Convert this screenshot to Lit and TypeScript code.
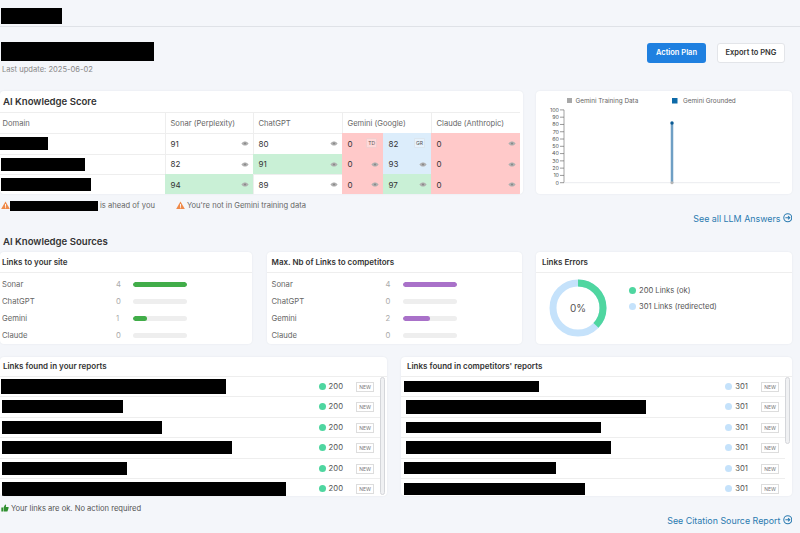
import { LitElement, html, css, svg } from "lit";
import { customElement } from "lit/decorators.js";

const eye = html`<svg class="eye" viewBox="0 0 10 6" width="8" height="5"><path d="M0.5 3C2 1 3.5 0.4 5 0.4S8 1 9.5 3C8 5 6.5 5.6 5 5.6S2 5 0.5 3Z" fill="#b0b0b0"/><circle cx="5" cy="3" r="1.3" fill="#888"/></svg>`;
const warn = html`<svg class="warn" viewBox="0 0 12 11" width="9" height="8.5"><path d="M6 0.4 11.8 10.6H0.2Z" fill="#ef8a4a"/><rect x="5.4" y="3.8" width="1.2" height="3.8" fill="#fff"/><rect x="5.4" y="8.2" width="1.2" height="1.2" fill="#fff"/></svg>`;
const arrow = html`<svg class="arrow" viewBox="0 0 12 12" width="9.5" height="9.5"><circle cx="6" cy="6" r="5" fill="none" stroke="#2a7ab0" stroke-width="1.3"/><path d="M3 6H8.4M6.4 3.9 8.6 6 6.4 8.1" fill="none" stroke="#2a7ab0" stroke-width="1.3"/></svg>`;
const thumb = html`<svg class="thumb" viewBox="0 0 12 12" width="8" height="8"><path d="M0.5 5.2H3V11.2H0.5ZM3.8 5.2 6.2 0.8C7.4 0.8 7.9 1.7 7.6 2.8L7.2 4.4H10.6C11.4 4.4 11.8 5.1 11.5 5.8L9.9 10.4C9.7 10.9 9.3 11.2 8.8 11.2H3.8Z" fill="#2f8f2f"/></svg>`;

type Cell = { v: number; bg?: string; tag?: string };
const rows: { w: number; x: number; cells: Cell[] }[] = [
  { w: 48, x: 0, cells: [{ v: 91 }, { v: 80 }, { v: 0, bg: "red", tag: "TD" }, { v: 82, bg: "blue", tag: "GR" }, { v: 0, bg: "red" }] },
  { w: 84, x: 1, cells: [{ v: 82 }, { v: 91, bg: "green" }, { v: 0, bg: "red" }, { v: 93, bg: "blue" }, { v: 0, bg: "red" }] },
  { w: 90, x: 1, cells: [{ v: 94, bg: "green" }, { v: 89 }, { v: 0, bg: "red" }, { v: 97, bg: "green" }, { v: 0, bg: "red" }] },
];
const yours = [["Sonar", 4], ["ChatGPT", 0], ["Gemini", 1], ["Claude", 0]] as [string, number][];
const rivals = [["Sonar", 4], ["ChatGPT", 0], ["Gemini", 2], ["Claude", 0]] as [string, number][];
const listA = [[1, 225, 15], [2, 121, 13], [2, 160, 13], [2, 230, 13], [2, 125, 13], [2, 284, 14]];
const listB = [[3, 135, 11], [5, 240, 14], [5, 195, 11], [5, 205, 13], [3, 152, 12], [3, 181, 12]];

@customElement("app-root")
export class AppRoot extends LitElement {
  static styles = css`
    :host { display: block; width: 800px; height: 533px; overflow: hidden; background: #f4f6fa; font-family: Inter, "Liberation Sans", sans-serif; color: #333; }
    .black { display: block; background: #000; }
    .top { border-bottom: 1px solid #dfe2e7; padding: 8px 0 0 1px; height: 18px; }
    .top .black { width: 61px; height: 16px; }
    .page { width: 792px; }
    .title { display: flex; justify-content: space-between; height: 33px; margin-top: 15px; padding-left: 1px; }
    .title .black { width: 153px; height: 19px; }
    .update { font-size: 7.6px; line-height: 13px; margin: 2px 0 0 1px; color: #888; }
    .btns { display: flex; gap: 11px; margin: 1px 7px 0 0; }
    .btn { height: 19.5px; box-sizing: border-box; border-radius: 3px; font-size: 7.5px; font-weight: 600; display: flex; align-items: center; justify-content: center; }
    .primary { width: 59px; background: #1f80e0; color: #fff; }
    .secondary { width: 68px; background: #fff; border: 1px solid #e3e5e9; color: #333; }
    .card { background: #fff; border-radius: 4px; box-shadow: 0 0 2px rgba(30,40,60,.08); overflow: hidden; position: relative; }
    .scoreRow { display: grid; grid-template-columns: 523px 256px; gap: 13px; height: 103px; margin-top: 16px; }
    h2 { margin: 0; font-size: 9.6px; font-weight: 600; color: #333; }
    .scoreTitle { height: 21px; display: flex; align-items: center; padding-left: 3px; }
    .table { display: grid; grid-template-columns: 165px 88px 89px 41px 48px 89px; grid-template-rows: 21px repeat(3, 20.5px); }
    .th { font-size: 7.6px; color: #666; display: flex; align-items: center; padding-left: 4.5px; border-top: 1px solid #eee; border-left: 1px solid #eee; box-sizing: border-box; white-space: nowrap; }
    .th.first { border-left: 0; padding-left: 2.5px; }
    .th.wide { grid-column: span 2; }
    .dom { border-top: 1px solid #eee; display: flex; align-items: center; box-sizing: border-box; }
    .dom .black { height: 13px; }
    .td { font-size: 8px; color: #333; display: flex; align-items: center; justify-content: space-between; padding: 0 4.5px; border-top: 1px solid #eee; border-left: 1px solid #eee; box-sizing: border-box; }
    .td.red { background: #ffc9c9; border-color: #ffc9c9; }
    .td.green { background: #c9f0d6; border-color: #c9f0d6; }
    .td.blue { background: #dcedfb; border-color: #dcedfb; }
    .eye { display: block; }
    .tag { font-size: 5px; color: #555; border: 1px solid rgba(0,0,0,.05); background: rgba(255,255,255,.3); height: 10px; min-width: 10px; padding: 0 1px; box-sizing: border-box; border-radius: 1px; display: flex; align-items: center; justify-content: center; margin: -1px 1.5px 0 0; }
    .chart { display: block; }
    .chart text { font-family: Inter, "Liberation Sans", sans-serif; }
    .warnings { display: flex; align-items: center; height: 13px; margin-top: 5px; padding-left: 1px; font-size: 7.6px; color: #666; }
    .warnings .black { width: 88px; height: 10px; margin: 0 2px 0 0; }
    .warn { display: block; flex: none; }
    .second { margin-left: 21px; display: flex; align-items: center; gap: 2px; }
    .link { height: 12px; display: flex; justify-content: flex-end; align-items: center; gap: 2px; font-size: 8.9px; color: #2a7ab0; }
    .arrow { display: block; }
    .heading { height: 14px; margin-top: 10px; padding-left: 3px; display: flex; align-items: center; }
    .srcRow { display: grid; grid-template-columns: 252px 255px 256px; column-gap: 14.5px; height: 92px; margin-top: 4px; }
    .cardHead { height: 21px; box-sizing: border-box; border-bottom: 1px solid #eee; display: flex; align-items: center; padding-left: 2px; font-size: 8px; font-weight: 600; color: #333; }
    .second-card .cardHead, .second-card .bars { padding-left: 5px; }
    .third-card .cardHead { padding-left: 6px; }
    .bars { padding: 3px 0 0 2px; }
    .bar { display: grid; grid-template-columns: 112px 19px 54px; align-items: center; height: 17px; font-size: 7.7px; color: #666; }
    .num { color: #aaa; text-align: left; padding-left: 2px; }
    .track { height: 5px; background: #eee; border-radius: 3px; overflow: hidden; }
    .fill { height: 5px; border-radius: 3px; }
    .fill.g { background: #41ad49; }
    .fill.p { background: #a971c9; }
    .errBody { display: flex; }
    .donut { display: block; margin: 4px 0 0 12px; flex: none; }
    .legend { margin: 9px 0 0 21px; font-size: 7.6px; color: #555; }
    .legend div { display: flex; align-items: center; gap: 3px; height: 16px; }
    .dot { width: 7px; height: 7px; border-radius: 50%; flex: none; display: block; }
    .dot.ok { background: #4fd6a0; }
    .dot.re { background: #c5e2fb; }
    .listRow { display: grid; grid-template-columns: 387px 391px; column-gap: 14px; height: 139px; margin-top: 13px; }
    .listHead { height: 19.5px; box-sizing: border-box; border-bottom: 1px solid #eee; display: flex; align-items: center; padding-left: 3px; font-size: 8px; font-weight: 600; }
    .second-list .listHead { padding-left: 6px; }
    .listBody { display: flex; height: 119.5px; overflow: hidden; }
    .rows { flex: 1; min-width: 0; }
    .row { height: 20.5px; box-sizing: border-box; border-bottom: 1px solid #eee; display: flex; align-items: center; }
    .status { margin-left: auto; display: flex; align-items: center; gap: 3px; font-size: 7.7px; color: #555; }
    .new { margin: 1px 6px 0 13px; width: 18px; height: 10px; box-sizing: border-box; border: 1px solid #ddd; font-size: 5px; color: #777; display: flex; align-items: center; justify-content: center; }
    .scroll { width: 7px; flex: none; box-sizing: border-box; }
    .thumbBar { width: 5px; border: 1px solid #d4d6da; background: #f0f1f3; border-radius: 3px; box-sizing: border-box; }
    .a .thumbBar { height: 118px; }
    .b .thumbBar { height: 67px; }
    .footer { display: flex; align-items: center; gap: 2px; height: 12px; margin-top: 6px; padding-left: 1px; font-size: 7.6px; color: #555; }
    .thumb { display: block; }
  `;

  private chart() {
    const ticks = [100, 90, 80, 70, 60, 50, 40, 30, 20, 10, 0];
    const y = (v: number) => 91.7 - (v / 100) * 72.8;
    return html`<svg class="chart" width="256" height="103" viewBox="0 0 256 103">
      <rect x="31" y="7" width="5" height="5" fill="#a8a8a8"/>
      <text x="39.5" y="11.8" font-size="6.4" fill="#666">Gemini Training Data</text>
      <rect x="136" y="7" width="5.5" height="5.5" fill="#0d6aa8"/>
      <text x="147" y="11.8" font-size="6.4" fill="#666">Gemini Grounded</text>
      ${ticks.map((t) => svg`
        <text x="23" y="${y(t) + 1.9}" font-size="5.4" fill="#555" text-anchor="end">${t}</text>
        <line x1="24" x2="28" y1="${y(t)}" y2="${y(t)}" stroke="#555" stroke-width=".6"/>`)}
      <line x1="28" x2="28" y1="${y(100)}" y2="${y(0)}" stroke="#666" stroke-width=".6"/>
      <line x1="28" x2="244" y1="${y(0)}" y2="${y(0)}" stroke="#e4e6ea" stroke-width=".8"/>
      <line x1="136" x2="136" y1="${y(82)}" y2="${y(0)}" stroke="#6f9fc4" stroke-width="2.5"/>
      <circle cx="136" cy="${y(0)}" r="1.5" fill="#b5b5b5"/>
      <circle cx="136" cy="${y(82)}" r="1.7" fill="#0a5a94"/>
    </svg>`;
  }

  private bars(data: [string, number][], cls: string) {
    return html`<div class="bars">${data.map(([n, v]) => html`
      <div class="bar"><span>${n}</span><span class="num">${v}</span>
        <div class="track"><div class="fill ${cls}" style="width:${(v / 4) * 100}%"></div></div></div>`)}</div>`;
  }

  private list(data: number[][], code: string, dot: string) {
    return html`<div class="rows">${data.map(([x, w, h]) => html`
      <div class="row"><span class="black" style="margin-left:${x}px;width:${w}px;height:${h}px"></span>
        <div class="status"><span class="dot ${dot}"></span>${code}</div><span class="new">NEW</span></div>`)}</div>`;
  }

  render() {
    const c = 2 * Math.PI * 25;
    return html`
      <div class="top"><span class="black"></span></div>
      <div class="page">
        <div class="title">
          <div><span class="black"></span><div class="update">Last update: 2025-06-02</div></div>
          <div class="btns"><div class="btn primary">Action Plan</div><div class="btn secondary">Export to PNG</div></div>
        </div>
        <div class="scoreRow">
          <div class="card">
            <div class="scoreTitle"><h2>AI Knowledge Score</h2></div>
            <div class="table">
              <div class="th first">Domain</div><div class="th">Sonar (Perplexity)</div><div class="th">ChatGPT</div>
              <div class="th wide">Gemini (Google)</div><div class="th">Claude (Anthropic)</div>
              ${rows.map((r) => html`
                <div class="dom"><span class="black" style="margin-left:${r.x}px;width:${r.w}px"></span></div>
                ${r.cells.map((k) => html`<div class="td ${k.bg ?? ""}"><span>${k.v}</span>${k.tag ? html`<span class="tag">${k.tag}</span>` : eye}</div>`)}`)}
            </div>
          </div>
          <div class="card">${this.chart()}</div>
        </div>
        <div class="warnings">${warn}<span class="black"></span><span>is ahead of you</span>
          <div class="second">${warn}<span>You're not in Gemini training data</span></div></div>
        <div class="link">See all LLM Answers ${arrow}</div>
        <div class="heading"><h2>AI Knowledge Sources</h2></div>
        <div class="srcRow">
          <div class="card"><div class="cardHead">Links to your site</div>${this.bars(yours, "g")}</div>
          <div class="card second-card"><div class="cardHead">Max. Nb of Links to competitors</div>${this.bars(rivals, "p")}</div>
          <div class="card third-card"><div class="cardHead">Links Errors</div>
            <div class="errBody">
              <svg class="donut" width="60" height="62" viewBox="0 0 60 62">
                <circle cx="30" cy="31" r="25" fill="none" stroke="#c5e2fb" stroke-width="7"/>
                <circle cx="30" cy="31" r="25" fill="none" stroke="#4fd6a0" stroke-width="7" stroke-dasharray="${c * 0.37} ${c}" transform="rotate(-90 30 31)"/>
                <text x="30" y="34.5" font-size="10" fill="#555" text-anchor="middle" font-family="Inter, sans-serif">0%</text>
              </svg>
              <div class="legend">
                <div><span class="dot ok"></span>200 Links (ok)</div>
                <div><span class="dot re"></span>301 Links (redirected)</div>
              </div>
            </div>
          </div>
        </div>
        <div class="listRow">
          <div class="card a"><div class="listHead">Links found in your reports</div>
            <div class="listBody">${this.list(listA, "200", "ok")}<div class="scroll"><div class="thumbBar"></div></div></div></div>
          <div class="card b second-list"><div class="listHead">Links found in competitors' reports</div>
            <div class="listBody">${this.list(listB, "301", "re")}<div class="scroll"><div class="thumbBar"></div></div></div></div>
        </div>
        <div class="footer">${thumb}<span>Your links are ok. No action required</span></div>
        <div class="link">See Citation Source Report ${arrow}</div>
      </div>
    `;
  }
}
